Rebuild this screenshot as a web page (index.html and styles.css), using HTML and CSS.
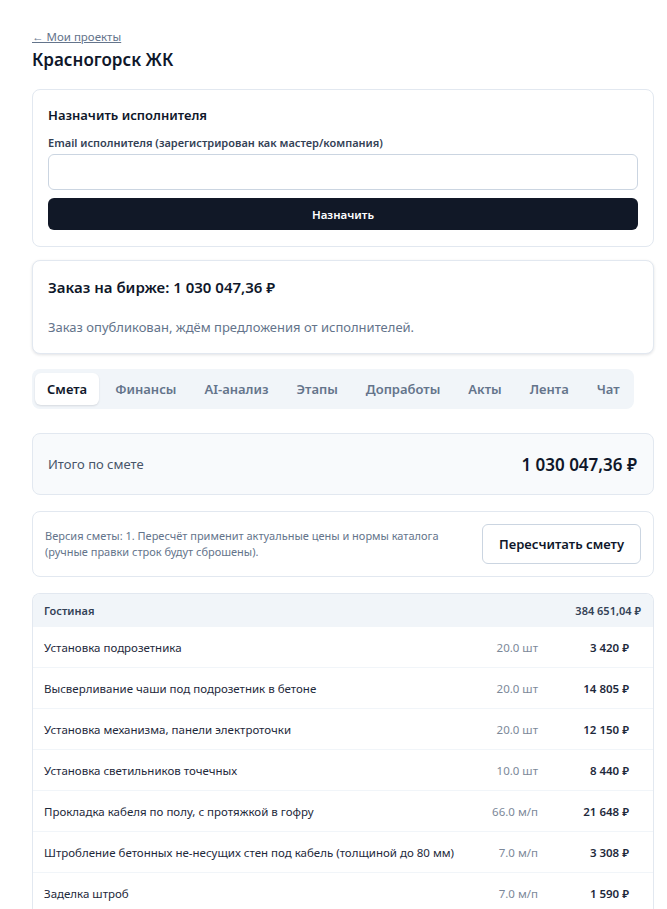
FILE: index.html
```html
<!DOCTYPE html>
<html lang="ru">
<head>
    <meta charset="UTF-8">
    <meta name="viewport" content="width=device-width, initial-scale=1.0">
    <title>Красногорск ЖК</title>
    <link rel="stylesheet" href="styles.css">
</head>
<body>
  <div class="page">

    <a href="#" class="back-link">← Мои проекты</a>
    <h1 class="project-title">Красногорск ЖК</h1>

    <div class="card assign-card">
      <h2 class="card-title">Назначить исполнителя</h2>
      <form action="" id="assign-form">
        <label for="executor-email" class="field-label">Email исполнителя (зарегистрирован как мастер/компания)</label>
        <input type="email" id="executor-email" class="field-input">
        <button type="submit" class="btn-dark">Назначить</button>
      </form>
    </div>

    <div class="card order-card">
      <h3 class="order-title">Заказ на бирже: 1 030 047,36 ₽</h3>
      <p class="order-note">Заказ опубликован, ждём предложения от исполнителей.</p>
    </div>

    <div class="tabs">
      <div class="tab active">Смета</div>
      <div class="tab">Финансы</div>
      <div class="tab">AI-анализ</div>
      <div class="tab">Этапы</div>
      <div class="tab">Допработы</div>
      <div class="tab">Акты</div>
      <div class="tab">Лента</div>
      <div class="tab">Чат</div>
    </div>

    <div class="card total-card">
      <span class="total-label">Итого по смете</span>
      <span class="total-sum">1 030 047,36 ₽</span>
    </div>

    <div class="card recalc-card">
      <p class="recalc-text">Версия сметы: 1. Пересчёт применит актуальные цены и нормы каталога (ручные правки строк будут сброшены).</p>
      <button type="button" class="btn-light">Пересчитать смету</button>
    </div>

    <div class="estimate">
      <div class="room-row">
        <span>Гостиная</span>
        <span>384 651,04 ₽</span>
      </div>
      <div id="estimate-rows"></div>
    </div>

  </div>

  <script>
    const rows = [
      { name: 'Установка подрозетника', qty: '20.0 шт', price: '3 420 ₽' },
      { name: 'Высверливание чаши под подрозетник в бетоне', qty: '20.0 шт', price: '14 805 ₽' },
      { name: 'Установка механизма, панели электроточки', qty: '20.0 шт', price: '12 150 ₽' },
      { name: 'Установка светильников точечных', qty: '10.0 шт', price: '8 440 ₽' },
      { name: 'Прокладка кабеля по полу, с протяжкой в гофру', qty: '66.0 м/п', price: '21 648 ₽' },
      { name: 'Штробление бетонных не-несущих стен под кабель (толщиной до 80 мм)', qty: '7.0 м/п', price: '3 308 ₽' },
      { name: 'Заделка штроб', qty: '7.0 м/п', price: '1 590 ₽' },
    ];

    const list = document.getElementById('estimate-rows');
    for (let row of rows) {
      let item = document.createElement('div');
      item.className = 'work-row';
      item.innerHTML = '<span class="work-name">' + row.name + '</span>';
      item.innerHTML += '<span class="work-qty">' + row.qty + '</span>';
      item.innerHTML += '<span class="work-price">' + row.price + '</span>';
      list.appendChild(item);
    }

    document.getElementById('assign-form').addEventListener('submit', function (event) {
      event.preventDefault();
    });
  </script>
</body>
</html>
```

FILE: styles.css
```css
* {
  box-sizing: border-box;
}

body {
  margin: 0;
  font-family: "Noto Sans", "Open Sans", sans-serif;
  color: #0f172a;
  background: #ffffff;
}

.page {
  padding: 24px 13px 0 32px;
}

.back-link {
  display: inline-block;
  font-size: 11.5px;
  color: #64748b;
  text-decoration: underline;
}

.project-title {
  margin: 2px 0 18px;
  font-size: 17px;
  font-weight: 600;
}

.card {
  border: 1px solid #e2e8f0;
  border-radius: 8px;
  background: #ffffff;
}

.assign-card {
  padding: 16px 15px 16px;
  margin-bottom: 13px;
}

.card-title {
  margin: 0 0 11px;
  font-size: 13px;
  font-weight: 600;
}

.field-label {
  display: block;
  font-size: 11px;
  font-weight: 600;
  color: #334155;
  margin-bottom: 4px;
}

.field-input {
  display: block;
  width: 100%;
  height: 36px;
  border: 1px solid #cbd5e1;
  border-radius: 6px;
  margin-bottom: 8px;
}

.btn-dark {
  display: block;
  width: 100%;
  height: 32px;
  border: none;
  border-radius: 6px;
  background: #111827;
  color: #ffffff;
  font-family: inherit;
  font-size: 11.5px;
  font-weight: 600;
}

.order-card {
  padding: 16px 15px 17px;
  margin-bottom: 15px;
  box-shadow: 0 1px 3px rgba(15, 23, 42, 0.12);
}

.order-title {
  margin: 0 0 21px;
  font-size: 15px;
  font-weight: 600;
}

.order-note {
  margin: 0;
  font-size: 13px;
  color: #64748b;
}

.tabs {
  display: flex;
  gap: 4px;
  width: 602px;
  padding: 4px 3px 4px;
  margin-bottom: 24px;
  background: #f1f5f9;
  border-radius: 8px;
}

.tab {
  padding: 7px 12px;
  font-size: 13px;
  font-weight: 600;
  color: #64748b;
  white-space: nowrap;
  border-radius: 6px;
}

.tab.active {
  background: #ffffff;
  color: #0f172a;
  box-shadow: 0 1px 2px rgba(15, 23, 42, 0.12);
}

.total-card {
  display: flex;
  justify-content: space-between;
  align-items: center;
  height: 62px;
  padding: 0 16px 0 15px;
  margin-bottom: 16px;
  background: #f8fafc;
}

.total-label {
  font-size: 13px;
  color: #475569;
}

.total-sum {
  font-size: 17px;
  font-weight: 600;
}

.recalc-card {
  display: flex;
  justify-content: space-between;
  align-items: center;
  padding: 12px;
  margin-bottom: 16px;
}

.recalc-text {
  margin: 0;
  width: 420px;
  font-size: 11px;
  line-height: 16px;
  color: #64748b;
}

.btn-light {
  height: 40px;
  padding: 0 16px;
  border: 1px solid #cbd5e1;
  border-radius: 6px;
  background: #ffffff;
  color: #0f172a;
  font-family: inherit;
  font-size: 13px;
  font-weight: 600;
}

.estimate {
  border: 1px solid #e2e8f0;
  border-bottom: none;
  border-radius: 8px 8px 0 0;
  overflow: hidden;
}

.room-row {
  display: flex;
  justify-content: space-between;
  align-items: center;
  height: 33px;
  padding: 0 12px 0 11px;
  background: #f1f5f9;
  font-size: 11px;
  font-weight: 600;
  color: #334155;
}

.work-row {
  display: grid;
  grid-template-columns: 1fr 70px 91px;
  align-items: center;
  height: 41px;
  padding: 0 24px 0 11px;
  border-bottom: 1px solid #f1f5f9;
  font-size: 11.5px;
}

.work-name {
  color: #1e293b;
  white-space: nowrap;
}

.work-qty {
  text-align: right;
  color: #7c8899;
}

.work-price {
  text-align: right;
  font-weight: 600;
  color: #1e293b;
}
```
